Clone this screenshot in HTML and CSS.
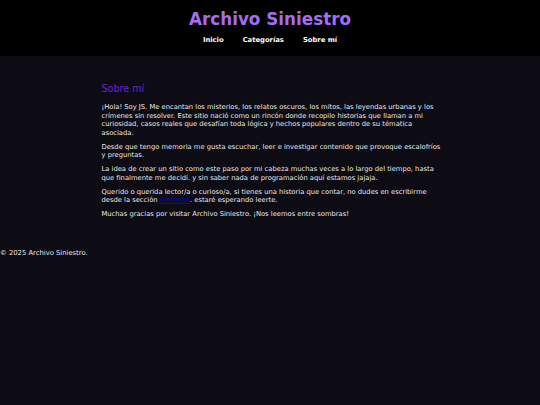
FILE: index.html
```html
<!DOCTYPE html>
<html lang="es">
<head>
<meta charset="utf-8">
<title>Sobre mí - Archivo Siniestro</title>
<link rel="stylesheet" href="styles.css">
</head>
<body>
<header class="site-header">
  <h1 class="site-title">Archivo Siniestro</h1>
  <nav class="nav">
    <a href="#">Inicio</a>
    <a href="#">Categorías</a>
    <a href="#">Sobre mí</a>
  </nav>
</header>
<main class="content">
  <h2 class="section-title">Sobre mí</h2>
  <p>¡Hola! Soy JS. Me encantan los misterios, los relatos oscuros, los mitos, las leyendas urbanas y los crímenes sin resolver. Este sitio nació como un rincón donde recopilo historias que llaman a mi curiosidad, casos reales que desafían toda lógica y hechos populares dentro de su tématica asociada.</p>
  <p>Desde que tengo memoria me gusta escuchar, leer e investigar contenido que provoque escalofríos y preguntas.</p>
  <p>La idea de crear un sitio como este paso por mi cabeza muchas veces a lo largo del tiempo, hasta que finalmente me decidí. y sin saber nada de programación aquí estamos jajaja.</p>
  <p>Querido o querida lector/a o curioso/a, si tienes una historia que contar, no dudes en escribirme desde la sección <a class="link" href="#">Contacto</a>. estaré esperando leerte.</p>
  <p>Muchas gracias por visitar Archivo Siniestro. ¡Nos leemos entre sombras!</p>
</main>
<footer class="footer">© 2025 Archivo Siniestro.</footer>
</body>
</html>
```
FILE: styles.css
```css
html, body {
  margin: 0;
  padding: 0;
}
body {
  background: #0d0b14;
  color: #e8e8e8;
  font-family: "DejaVu Sans", Verdana, sans-serif;
  font-size: 6.8px;
  min-height: 405px;
}
.site-header {
  background: #000;
  text-align: center;
  padding: 8px 0 10px;
  height: 38px;
}
.site-title {
  margin: 0;
  color: #a56ef0;
  font-size: 16.8px;
  font-weight: bold;
  line-height: 22px;
}
.nav {
  display: flex;
  justify-content: center;
  gap: 19px;
  margin-top: 6px;
}
.nav a {
  color: #fff;
  text-decoration: none;
  font-weight: bold;
  font-size: 6.8px;
}
.content {
  width: 343px;
  margin: 0 auto;
  padding: 27px 0 10px 6px;
  font-size: 6.75px;
}
.section-title {
  color: #6a22d8;
  font-size: 9.6px;
  font-weight: normal;
  margin: 0 0 9px;
}
.content p {
  margin: 0 0 5.6px;
  line-height: 8.5px;
}
.link {
  color: #0000ee;
}
.footer {
  padding-top: 15px;
}
```
